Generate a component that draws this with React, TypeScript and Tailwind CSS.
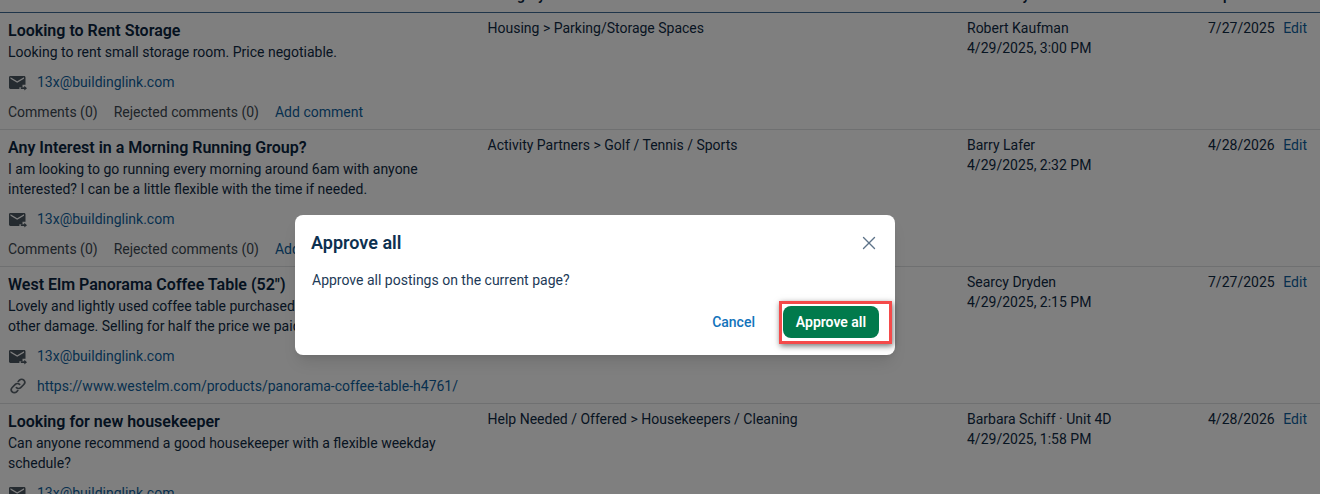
import { X } from 'lucide-react';

type Posting = {
  title: string;
  body: string[];
  category: string;
  author: string;
  posted: string;
  expires: string;
  url?: string;
  comments?: boolean;
  height: string;
};

const postings: Posting[] = [
  {
    title: 'Looking to Rent Storage',
    body: ['Looking to rent small storage room. Price negotiable.'],
    category: 'Housing > Parking/Storage Spaces',
    author: 'Robert Kaufman',
    posted: '4/29/2025, 3:00 PM',
    expires: '7/27/2025',
    comments: true,
    height: 'h-[117px]',
  },
  {
    title: 'Any Interest in a Morning Running Group?',
    body: ['I am looking to go running every morning around 6am with anyone', 'interested? I can be a little flexible with the time if needed.'],
    category: 'Activity Partners > Golf / Tennis / Sports',
    author: 'Barry Lafer',
    posted: '4/29/2025, 2:32 PM',
    expires: '4/28/2026',
    comments: true,
    height: 'h-[137px]',
  },
  {
    title: 'West Elm Panorama Coffee Table (52")',
    body: ['Lovely and lightly used coffee table purchased in 2023. No scratches or', 'other damage. Selling for half the price we paid.'],
    category: 'For Sale > Furniture',
    author: 'Searcy Dryden',
    posted: '4/29/2025, 2:15 PM',
    expires: '7/27/2025',
    url: 'https://www.westelm.com/products/panorama-coffee-table-h4761/',
    height: 'h-[137px]',
  },
  {
    title: 'Looking for new housekeeper',
    body: ['Can anyone recommend a good housekeeper with a flexible weekday', 'schedule?'],
    category: 'Help Needed / Offered > Housekeepers / Cleaning',
    author: 'Barbara Schiff · Unit 4D',
    posted: '4/29/2025, 1:58 PM',
    expires: '4/28/2026',
    height: 'h-[137px]',
  },
];

const MailIcon = () => (
  <svg viewBox="0 0 18 15" className="mt-[2px] h-[15px] w-[18px] shrink-0 text-[#4a5660]" fill="currentColor">
    <path d="M1.4 0h13.7c.8 0 1.4.6 1.4 1.4v7.4h-3v2.4H10.4V13H1.4C.6 13 0 12.4 0 11.6V1.4C0 .6.6 0 1.4 0Zm6.8 6.8L15 2.7V1.2L8.2 5.3 1.5 1.2v1.5l6.7 4.1Z" />
    <path d="M11.8 11.3h3.5V9.8l2.7 2.4-2.7 2.4v-1.5h-3.5v-1.8Z" />
  </svg>
);

const LinkIcon = () => (
  <svg viewBox="0 0 18 18" className="h-[18px] w-[18px] shrink-0 text-[#5a646d]" fill="none" stroke="currentColor" strokeWidth="1.7" strokeLinecap="round">
    <path d="M7.4 10.6a3 3 0 0 0 4.3 0l3.1-3.1a3 3 0 0 0-4.3-4.3L9.2 4.5" />
    <path d="M10.6 7.4a3 3 0 0 0-4.3 0l-3.1 3.1a3 3 0 0 0 4.3 4.3l1.3-1.3" />
  </svg>
);

const PostingRow = ({ post }: { post: Posting }) => (
  <div className={`flex shrink-0 border-b border-[#dfe1e3] ${post.height}`}>
    <div className="w-[487.5px] shrink-0 pt-[7px] pl-2">
      <h3 className="text-base leading-[22px] font-semibold text-[#0a2540]">{post.title}</h3>
      {post.body.map((line) => (
        <p key={line} className="leading-5 whitespace-nowrap text-[#0f2a44]">{line}</p>
      ))}
      <div className="mt-[10px] flex h-5 items-center gap-[10px] pl-[1px]">
        <MailIcon />
        <a className="text-[#0e5f9e]">13x@buildinglink.com</a>
      </div>
      {post.url && (
        <div className="mt-[10px] flex h-5 items-center gap-[10px] pl-[1px]">
          <LinkIcon />
          <a className="whitespace-nowrap text-[#0e5f9e]">{post.url}</a>
        </div>
      )}
      {post.comments && (
        <div className="mt-[10px] flex h-5 items-center gap-4 text-[#3d4852]">
          <span>Comments (0)</span>
          <span>Rejected comments (0)</span>
          <a className="text-[#0e5f9e]">Add comment</a>
        </div>
      )}
    </div>
    <div className="w-[479.5px] shrink-0 pt-[5px] text-[#0f2a44]">{post.category}</div>
    <div className="w-[213px] shrink-0 pt-[5px] leading-5 text-[#0f2a44]">
      <div>{post.author}</div>
      <div>{post.posted}</div>
    </div>
    <div className="flex flex-1 justify-between pt-[5px] pr-[13px] text-[#0f2a44]">
      <span className="ml-[28px]">{post.expires}</span>
      <a className="text-[#0e5f9e]">Edit</a>
    </div>
  </div>
);

export default function App() {
  return (
    <div className="relative h-[494px] w-[1320px] overflow-hidden bg-white font-['Roboto',sans-serif] text-sm">
      <div className="flex h-full flex-col">
        {/* table header is scrolled almost out of view, only descenders show */}
        <div className="relative h-[13px] shrink-0 overflow-hidden border-b border-[#3f6a94] font-semibold text-[#0a2540]">
          <span className="absolute -top-[15px] left-[488px]">Category</span>
          <span className="absolute -top-[15px] left-[967px]">Posted by</span>
          <span className="absolute -top-[15px] left-[1208px]">Expires</span>
        </div>
        {postings.map((post) => (
          <PostingRow key={post.title} post={post} />
        ))}
      </div>

      <div className="absolute inset-0 bg-black/50 pt-[215px] pl-[295px]">
        <div className="flex h-[140px] w-[600px] flex-col rounded-lg bg-white shadow-lg">
          <div className="flex items-center justify-between pt-[16px] pr-[15px] pl-4">
            <h2 className="text-lg leading-6 font-semibold text-[#0d3050]">Approve all</h2>
            <X size={22} strokeWidth={1.5} className="text-[#5d7389]" />
          </div>
          <p className="mt-[15px] pl-[17px] leading-5 text-[#1d3a57]">Approve all postings on the current page?</p>
          <div className="mt-4 flex items-center justify-end pr-4">
            <button className="mr-[28px] font-medium text-[#1273bb]">Cancel</button>
            <div className="relative">
              <button className="h-[32px] w-[96px] rounded-lg bg-[#017a4c] font-semibold text-white">Approve all</button>
              {/* red highlight drawn over the screenshot */}
              <div className="absolute -top-[5px] -right-[13px] -bottom-[6px] -left-[4px] border-[3px] border-[#f44a4a] shadow-[1px_2px_6px_rgba(0,0,0,0.55)]" />
            </div>
          </div>
        </div>
      </div>
    </div>
  );
}
